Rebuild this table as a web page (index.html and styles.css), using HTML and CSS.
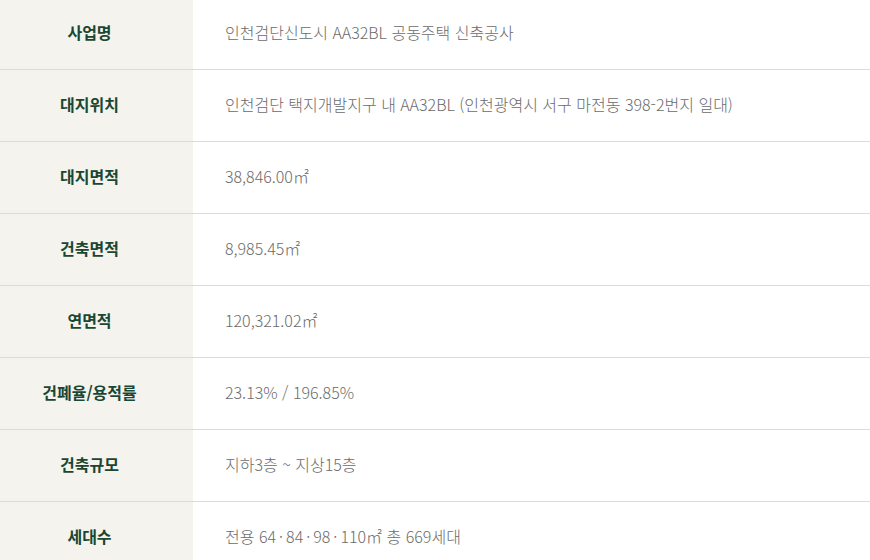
FILE: index.html
```html
<!DOCTYPE html>
<html lang="ko">
<head>
    <meta charset="UTF-8">
    <meta name="viewport" content="width=device-width, initial-scale=1.0">
    <title>사업개요</title>
    <link rel="stylesheet" href="styles.css">
</head>
<body>

<table class="overview">
    <tbody>
        <tr>
            <th>사업명</th>
            <td>인천검단신도시 AA32BL 공동주택 신축공사</td>
        </tr>
        <tr>
            <th>대지위치</th>
            <td>인천검단 택지개발지구 내 AA32BL (인천광역시 서구 마전동 398-2번지 일대)</td>
        </tr>
        <tr>
            <th>대지면적</th>
            <td>38,846.00㎡</td>
        </tr>
        <tr>
            <th>건축면적</th>
            <td>8,985.45㎡</td>
        </tr>
        <tr>
            <th>연면적</th>
            <td>120,321.02㎡</td>
        </tr>
        <tr>
            <th>건폐율/용적률</th>
            <td>23.13% / 196.85%</td>
        </tr>
        <tr>
            <th>건축규모</th>
            <td>지하3층 ~ 지상15층</td>
        </tr>
        <tr>
            <th>세대수</th>
            <td>전용 64<span class="dot">·</span>84<span class="dot">·</span>98<span class="dot">·</span>110㎡ 총 669세대</td>
        </tr>
    </tbody>
</table>

</body>
</html>
```

FILE: styles.css
```css
body {
    font-family: "Noto Sans CJK KR", "Noto Sans", sans-serif;
    background-color: #ffffff;
    margin: 0;
}
.overview {
    width: 100%;
    border-collapse: collapse;
    margin-top: -3px;
}
.overview tr {
    height: 72px;
}
.overview th,
.overview td {
    padding: 0 0 2px 0;
    border-bottom: 1px solid #dcdcdc;
    font-size: 16px;
    vertical-align: middle;
}
.overview th {
    width: 179px;
    padding-right: 14px;
    background-color: #f4f3ed;
    color: #1a4733;
    font-weight: bold;
    text-align: center;
}
.overview td {
    padding-left: 32px;
    color: #6b6b6b;
    font-weight: 300;
    text-align: left;
}
.dot {
    margin: 0 3px;
}
```
